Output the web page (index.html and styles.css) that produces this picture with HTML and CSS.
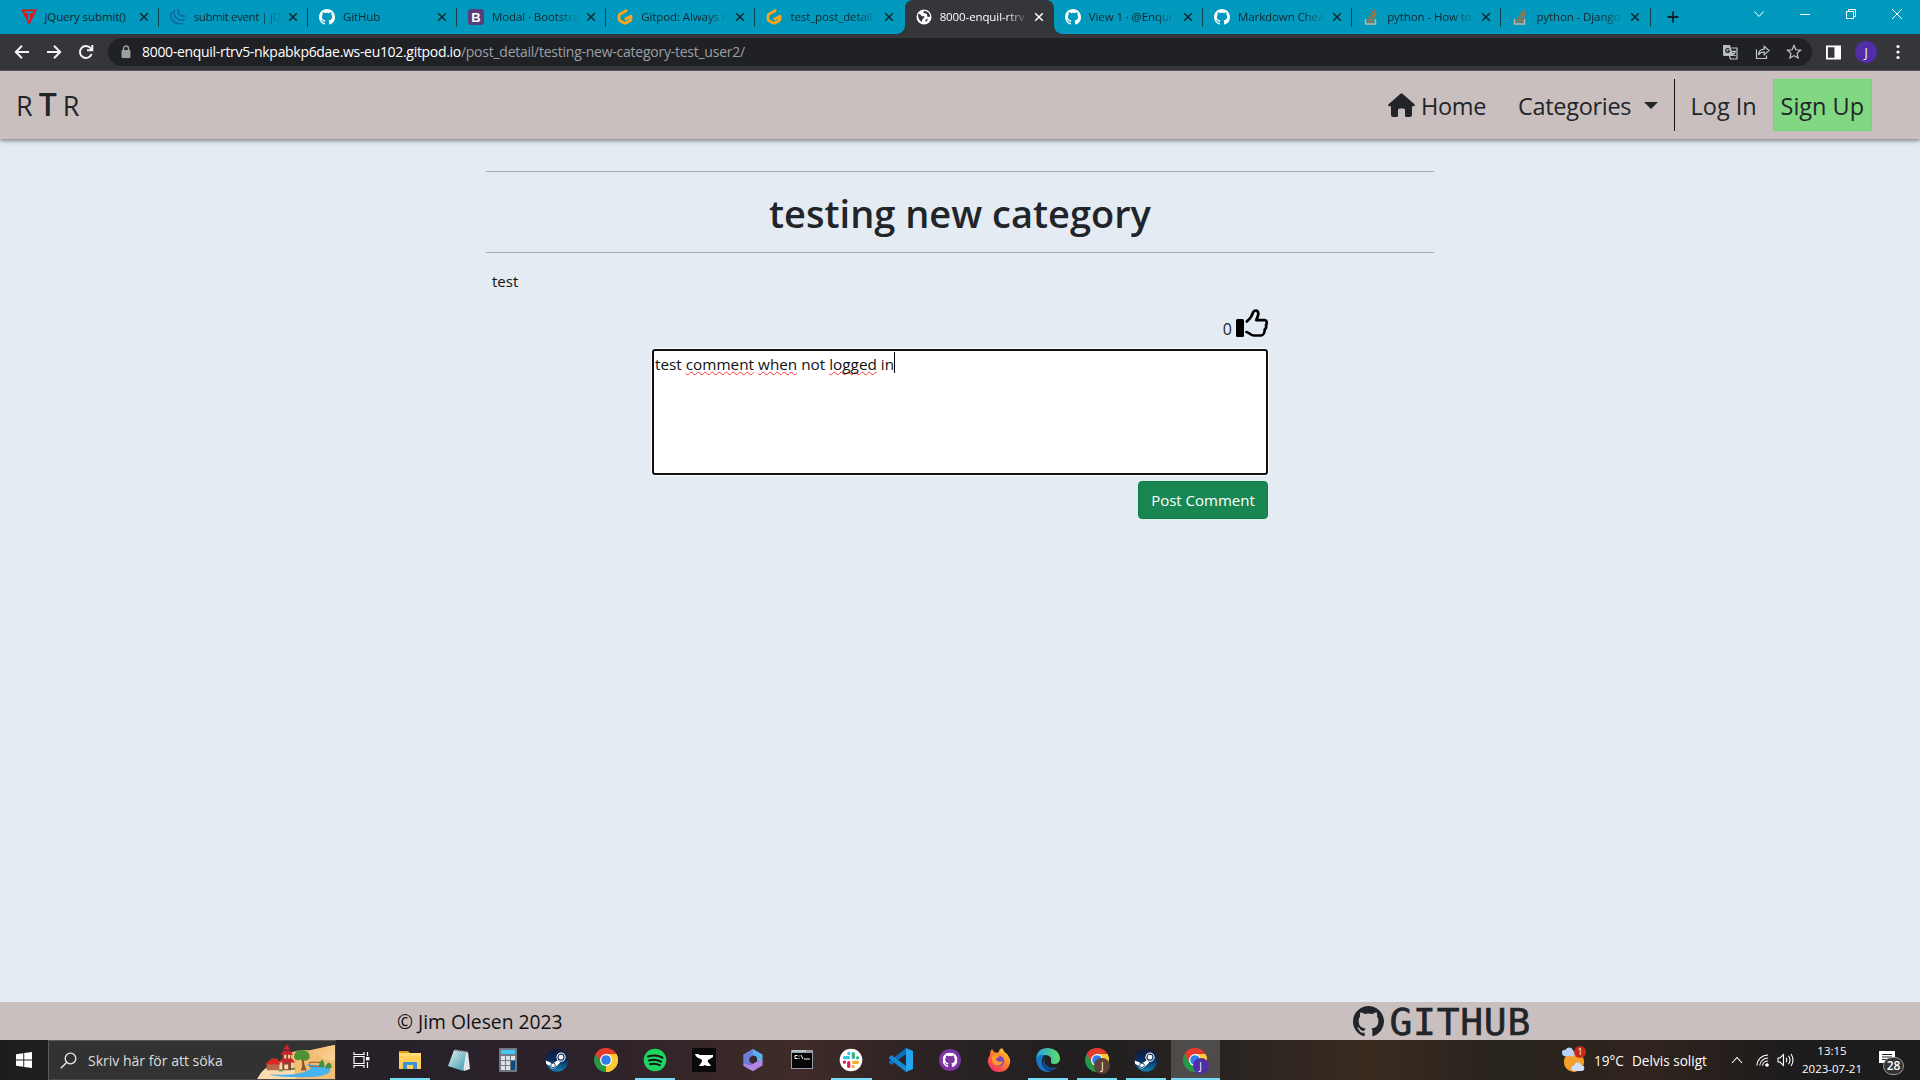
FILE: index.html
```
<!DOCTYPE html>
<html lang="sv">
<head>
<meta charset="utf-8">
<title>RTR - testing new category</title>
<link rel="stylesheet" href="styles.css">
</head>
<body>
<svg class="defs" width="0" height="0">
  <symbol id="github" viewBox="0 0 16 16"><path d="M8 0C3.58 0 0 3.58 0 8c0 3.54 2.29 6.53 5.47 7.59.4.07.55-.17.55-.38 0-.19-.01-.82-.01-1.49-2.01.37-2.53-.49-2.69-.94-.09-.23-.48-.94-.82-1.13-.28-.15-.68-.52-.01-.53.63-.01 1.08.58 1.23.82.72 1.21 1.87.87 2.33.66.07-.52.28-.87.51-1.07-1.78-.2-3.64-.89-3.64-3.95 0-.87.31-1.59.82-2.15-.08-.2-.36-1.02.08-2.12 0 0 .67-.21 2.2.82.64-.18 1.32-.27 2-.27s1.36.09 2 .27c1.53-1.04 2.2-.82 2.2-.82.44 1.1.16 1.92.08 2.12.51.56.82 1.27.82 2.15 0 3.07-1.87 3.75-3.65 3.95.29.25.54.73.54 1.48 0 1.07-.01 1.93-.01 2.2 0 .21.15.46.55.38A8.01 8.01 0 0 0 16 8c0-4.42-3.58-8-8-8z" fill="currentColor"/></symbol>
  <symbol id="x" viewBox="0 0 10 10"><path d="M1.2 1.2l7.6 7.6M8.8 1.2L1.2 8.8" stroke="currentColor" stroke-width="1.5" fill="none"/></symbol>
  <symbol id="gitpod" viewBox="0 0 16 16"><path d="M9.2 1.7L3.3 5Q2 5.7 2 7v3q0 1.200 1.100 1.800l4 2.200q.9.500 1.800 0l4-2.200Q14 11.200 14 10V7.200L8.800 10" fill="none" stroke="#ffa41b" stroke-width="2.800" stroke-linecap="round" stroke-linejoin="round"/></symbol>
  <symbol id="stack" viewBox="0 0 16 16"><path d="M2.500 10v5h10v-5" fill="none" stroke="#c5b3a8" stroke-width="1.500"/><path d="M4.500 12.800h6.200M4.600 10.500l6.200.7M5.300 7.700l6 1.800M6.900 4.600l5.300 3.400M9.200 2.200l3.700 4.900M11.300.6l1.700 4" stroke="#c96b28" stroke-width="1.300"/></symbol>
  <symbol id="chrome" viewBox="0 0 24 24"><path d="M12 12L1.610 6A12 12 0 0 1 22.390 6z" fill="#e33b2e"/><path d="M12 12L22.390 6A12 12 0 0 1 12 24z" fill="#fcc934"/><path d="M12 12V24A12 12 0 0 1 1.610 6z" fill="#279847"/><path d="M12 6h10.390A12 12 0 0 0 1.610 6L7 15z" fill="#e33b2e"/><path d="M12 6h10.390A12 12 0 0 1 12 24l5.200-9z" fill="#fcc934"/><circle cx="12" cy="12" r="6" fill="#fff"/><circle cx="12" cy="12" r="4.800" fill="#2f7de9"/></symbol>
  <symbol id="steam" viewBox="0 0 24 24"><linearGradient id="stg" x1="0" y1="0" x2="0" y2="1"><stop offset="0" stop-color="#131a38"/><stop offset=".5" stop-color="#0b2c59"/><stop offset="1" stop-color="#137fb5"/></linearGradient><circle cx="12" cy="12" r="11.500" fill="url(#stg)"/><path d="M.8 12.500l7 2.900 5-3.200 2.500 2.300-4.500 4.300q-2 3-5 .9l-1-2-3.600-1.600z" fill="#fff"/><circle cx="16" cy="9.200" r="4.600" fill="#fff"/><circle cx="16" cy="9.200" r="3" fill="#fff" stroke="#17335d" stroke-width="1.200"/><circle cx="8" cy="17.300" r="2.300" fill="none" stroke="#17335d" stroke-width=".9"/></symbol>
</svg>

<div class="tabstrip">
  <div class="tab"><svg class="fav" viewBox="0 0 16 16"><path d="M0 .5h16L8.200 16z" fill="#f20d12"/><path d="M3.500 3.200h9M8 3.200v8" stroke="#0199bd" stroke-width="2"/></svg><span class="title">jQuery submit()</span><svg class="close"><use href="#x"/></svg></div>
  <div class="tab"><svg class="fav" viewBox="0 0 16 16"><path d="M1.500 3.500C-1 9 4 16 12 14.500M4.500 1.500C2.500 6 7 12.500 14 10.800M8.300 1C7.500 4 10 7.800 15 7" fill="none" stroke="#1265ad" stroke-width="1.700" stroke-linecap="round"/></svg><span class="title tight">submit event | jQ</span><svg class="close"><use href="#x"/></svg></div>
  <div class="tab"><svg class="fav white"><use href="#github"/></svg><span class="title">GitHub</span><svg class="close"><use href="#x"/></svg></div>
  <div class="tab"><svg class="fav" viewBox="0 0 16 16"><rect width="16" height="16" rx="3" fill="#563d7c"/><text x="8" y="12.800" text-anchor="middle" class="bs">B</text></svg><span class="title">Modal · Bootstra</span><svg class="close"><use href="#x"/></svg></div>
  <div class="tab"><svg class="fav"><use href="#gitpod"/></svg><span class="title">Gitpod: Always r</span><svg class="close"><use href="#x"/></svg></div>
  <div class="tab last"><svg class="fav"><use href="#gitpod"/></svg><span class="title">test_post_detail.</span><svg class="close"><use href="#x"/></svg></div>
  <div class="tab active"><svg class="fav" viewBox="0 0 16 16"><circle cx="8" cy="8" r="7.500" fill="#fff"/><path d="M2 5q2-.5 3 1.300t3 .7q1.500 1.200-.5 2.200T6 13Q2 11 2 5zM8 1.800Q6.500 4 9 4.300t2.200 2.400 3 .8Q14 3 8 1.800zM9 11l3-1.500-1.500 3.500z" fill="#35363a"/></svg><span class="title">8000-enquil-rtrv</span><svg class="close"><use href="#x"/></svg></div>
  <div class="tab"><svg class="fav white"><use href="#github"/></svg><span class="title">View 1 · @Enqui</span><svg class="close"><use href="#x"/></svg></div>
  <div class="tab"><svg class="fav white"><use href="#github"/></svg><span class="title">Markdown Chea</span><svg class="close"><use href="#x"/></svg></div>
  <div class="tab"><svg class="fav"><use href="#stack"/></svg><span class="title">python - How to</span><svg class="close"><use href="#x"/></svg></div>
  <div class="tab"><svg class="fav"><use href="#stack"/></svg><span class="title">python - Django</span><svg class="close"><use href="#x"/></svg></div>
  <svg class="plus" viewBox="0 0 12 12"><path d="M6 .5v11M.5 6h11" stroke="#10252c" stroke-width="1.900"/></svg>
  <div class="wincontrols">
    <svg viewBox="0 0 12 12"><path d="M1.500 3.500L6 8.500l4.500-5"/></svg>
    <svg viewBox="0 0 12 12"><path d="M1 6.500h10"/></svg>
    <svg viewBox="0 0 12 12"><path d="M1.500 3.500h7v7h-7zM3.500 3.500v-2h7v7h-2"/></svg>
    <svg viewBox="0 0 12 12"><path d="M1 1l10 10M11 1L1 11"/></svg>
  </div>
</div>

<div class="toolbar">
  <svg class="tb" viewBox="0 0 16 16"><path d="M15 8H2M8 1.800L1.800 8 8 14.200"/></svg>
  <svg class="tb" viewBox="0 0 16 16"><path d="M1 8h13M8 1.800L14.200 8 8 14.200"/></svg>
  <svg class="tb" viewBox="0 0 16 16"><path d="M13.600 10A6 6 0 1 1 12.600 4.200L14 6M14.300 1v5.300H9"/></svg>
  <div class="omnibox">
    <svg class="lock" viewBox="0 0 10 14"><rect x=".5" y="5" width="9" height="8" rx="1" fill="#9aa0a6"/><path d="M2.500 5V3.500a2.500 2.500 0 0 1 5 0V5" fill="none" stroke="#9aa0a6" stroke-width="1.400"/></svg>
    <span class="url"><span class="domain">8000-enquil-rtrv5-nkpabkp6dae.ws-eu102.gitpod.io</span><span class="path">/post_detail/testing-new-category-test_user2/</span></span>
    <svg class="ob" viewBox="0 0 16 16"><path d="M1 1h7l3.500 11H2q-1 0-1-1z" fill="#b9bcc0" stroke="none"/><path d="M9.500 4H15v11H8.500l-1-3M10 7.500h4M12 6.500v1M13.200 7.500q-.7 2.500-2.700 4M10.800 9l2.700 3"/><path d="M7.200 5.200a2 2 0 1 0 .1 2.500V6.800H5.500" stroke="#202124"/></svg>
    <svg class="ob" viewBox="0 0 16 16"><path d="M2.500 5.500V14.500H12.500V11.500M4.500 11Q5 5.300 10.200 5.200V2.300L15 6.600l-4.800 4.200V8Q6.500 7.800 4.500 11z"/></svg>
    <svg class="ob" viewBox="0 0 16 16"><path d="M8 1.500l1.900 4.300 4.700.5-3.500 3.100 1 4.600L8 11.600 3.900 14l1-4.600L1.400 6.300l4.700-.5z"/></svg>
  </div>
  <svg class="panel" viewBox="0 0 16 16"><path d="M1 1.500h14v13H1z" fill="none" stroke="#fff" stroke-width="2"/><path d="M9 1h6v14H9z" fill="#fff"/></svg>
  <span class="avatar">J</span>
  <svg class="dots" viewBox="0 0 4 16"><circle cx="2" cy="2.500" r="1.600"/><circle cx="2" cy="8" r="1.600"/><circle cx="2" cy="13.500" r="1.600"/></svg>
</div>

<nav class="navbar">
  <a class="brand"><span>R</span><b>T</b><span>R</span></a>
  <div class="links">
    <a class="home"><svg viewBox="0 0 27 24"><path d="M12.500.7q1-.9 2 0L26.500 11.300q.8 1.500-.8 2H24V22q0 2-2 2h-3.500q-1.500 0-1.500-1.500V17q0-1.500-1.500-1.500h-4Q10 15.500 10 17v5.500Q10 24 8.500 24H5q-2 0-2-2v-8.700H1.300Q-.3 12.800.5 11.300z" fill="#212529"/></svg><span class="label">Home</span></a>
    <a class="cats"><span class="label">Categories</span><i class="caret"></i></a>
    <a class="login"><span>Log In</span></a>
    <a class="signup"><span>Sign Up</span></a>
  </div>
</nav>

<main>
  <div class="post-head"><h1>testing new category</h1></div>
  <p class="post-body">test</p>
  <section class="comment">
    <div class="likes"><span>0</span><svg viewBox="0 0 32 28"><rect y="10" width="8" height="18" rx="1.500"/><path d="M10.800 12.500C14 10 16 7 17 3.500C18 .8 21.800 1 22.300 4C22.600 7 21 8.500 20.300 11.200L28.500 11C31 11.200 31.300 14 30 16C30.500 18 29.500 20 28.700 20.500C28.700 23 27.500 26.500 25 26.500H18C14.500 26.500 13.500 23.500 10.500 23" fill="none" stroke="#000" stroke-width="2.700" stroke-linecap="round" stroke-linejoin="round"/></svg></div>
    <div class="textarea"><span>test <u>comment</u> <u>when</u> not <u>logged</u> in</span><i class="cursor"></i></div>
    <button class="post">Post Comment</button>
  </section>
</main>

<footer>
  <span>© Jim Olesen 2023</span>
  <a class="gh"><svg><use href="#github"/></svg><span class="gh-text">GITHUB</span></a>
</footer>

<div class="taskbar">
  <div class="start"><svg viewBox="0 0 16 16"><path d="M0 2.300L7.300 1.200V7.600H0zM8.200 1L16 0V7.600H8.200zM0 8.400H7.300V14.800L0 13.700zM8.200 8.400H16V16L8.200 15z" fill="#fff"/></svg></div>
  <div class="search">
    <svg class="glass" viewBox="0 0 17 17"><circle cx="10.500" cy="6.500" r="5.300"/><path d="M6.800 10.200L.8 16.300"/></svg>
    <span>Skriv här för att söka</span>
    <svg class="scene" viewBox="0 0 80 39"><defs><linearGradient id="sand" x1="0" y1="0" x2="1" y2="1"><stop offset="0" stop-color="#f5b867"/><stop offset="1" stop-color="#f8d49d"/></linearGradient></defs><path d="M0 39Q6 26 22 22Q34 11 50 12Q62 8 80 4V39z" fill="#fbdcae"/><path d="M34 12Q50 6 62 13Q72 18 80 18V39H40z" fill="#f3bd74"/><path d="M52 10Q68 6 80 4v16Q68 20 60 12z" fill="url(#sand)"/><path d="M14 34Q40 36 50 31Q60 28 50 24Q68 24 75 28Q77 36 55 37Q30 38 14 35z" fill="#45b3ee"/><path d="M10 23h13v7H10z" fill="#b56a4d"/><path d="M8 24l7-6h6l3 6z" fill="#d92a27"/><path d="M26 12h9v18h-9z" fill="#89432f"/><path d="M23 22l3-4h10l3 4zM24 14l3-4h7l3 4zM27 9l3.500-6L34 9z" fill="#c9232c"/><path d="M28 14h2v4h-2zM32 14h2v4h-2zM28 24h4v5h-4z" fill="#ffdda1"/><path d="M45 30q3-6 0-12h3q0 7 3 12z" fill="#87502c"/><path d="M38 17q0-8 8-8q9 1 8 9q-4 4-9 1q-6 2-7-2z" fill="#4f9133"/><path d="M54 22h11v4H54z" fill="none" stroke="#a26e40" stroke-width="1.200"/><path d="M64 27q-1-5 3-8q3 4 2 8zM70 28q0-4 4-6q4 3 2 6zM34 30q2-5 6-1zM22 31q2-4 5 0z" fill="#3f9142"/></svg>
  </div>
  <div class="apps">
    <div class="app"><svg viewBox="0 0 24 24"><path d="M5 4v2.500h10V4M5 20v-2.500h10V20M5 8.500h10v7H5zM18.500 4v4M18.500 14v6" fill="none" stroke="#fff" stroke-width="1.200"/><path d="M17 9h3.500v3.300H17z" fill="#fff"/></svg></div>
    <div class="app open"><svg viewBox="0 0 24 24"><path d="M1 3h9l2 2H1z" fill="#e09c14"/><path d="M1 5h22v16H1z" fill="#ffcf57"/><path d="M1 5h22v3H1z" fill="#ffda75"/><path d="M5 21v-6q0-1 1-1h12q1 0 1 1v6h-4v-4H9v4z" fill="#3b94d9"/></svg></div>
    <div class="app"><svg viewBox="0 0 24 24"><defs><linearGradient id="np" x2="1" y2="1"><stop stop-color="#e1f2f2"/><stop offset="1" stop-color="#3e98aa"/></linearGradient></defs><path d="M7 2l14 2 2 17-6 2z" fill="#e1e7e9"/><path d="M7 2l12 3-3 18L1 18z" fill="url(#np)"/><path d="M8 2l13 2" stroke="#777" stroke-width="2" stroke-dasharray="1 1"/></svg></div>
    <div class="app"><svg viewBox="0 0 24 24"><rect x="3" width="18" height="24" rx="1" fill="#6e7a84"/><path d="M5 2h14v4H5z" fill="#48c7f3"/><path d="M5 8h4v4H5zM10 8h4v4h-4zM15 8h4v4h-4zM5 13h4v4H5zM10 13h4v4h-4zM5 18h4v4H5zM10 18h4v4h-4z" fill="#dfe3e6"/><path d="M15 13h4v9h-4z" fill="#0c4a82"/></svg></div>
    <div class="app"><svg><use href="#steam"/></svg></div>
    <div class="app"><svg><use href="#chrome"/></svg></div>
    <div class="app open"><svg viewBox="0 0 24 24"><circle cx="12" cy="12" r="11.300" fill="#1fd45f"/><path d="M5 8.500q8-2.500 14.500 1.200M6 12.500q6.500-2 12 1.200M7 16.200q5-1.500 9.800 1" fill="none" stroke="#151515" stroke-width="2" stroke-linecap="round"/></svg></div>
    <div class="app"><svg viewBox="0 0 24 24"><path d="M0 0h24v24H0z" fill="#090909"/><path d="M3 6h4v1h14v2l-5 3q-1 2 1 3l2 3h-4l-2-1-2 1H7l2-3q2-2 0-4Q4 10 3 6z" fill="#fff"/></svg></div>
    <div class="app"><svg viewBox="0 0 24 24"><path d="M12 1L2.500 6.500v11.500l7 4 2.500-6-3.500-2v-4l6-3z" fill="#7c68d5"/><path d="M12 1l9.500 5.500v8L15 12V8.500L9 6z" fill="#57b3ea"/><path d="M21.500 12v5.500L12 23.300l-9.500-5.500v-2.500l7 2L16 13z" fill="#b184e4"/><path d="M2.500 6.500v9l5.500 1V9l4-3V1z" fill="#6b7fda"/><path d="M9.500 9l3.500-1.500 3 2v4l-4 2-3-2z" fill="#34292c"/></svg></div>
    <div class="app"><svg viewBox="0 0 24 24"><path d="M1 2h22v19H1z" fill="#939da8"/><path d="M2 5h20v15H2z" fill="#050505"/><path d="M2 3h14" stroke="#dce5ed"/><path d="M7.500 7.500H5v3h2.500M9 7.500v1M9 10v1M11 7l2 4M14 11h6" stroke="#fff" fill="none"/></svg></div>
    <div class="app open"><svg viewBox="0 0 24 24"><circle cx="12" cy="12" r="11.300" fill="#fff"/><g fill="none" stroke-width="3.200" stroke-linecap="round"><path d="M5.500 9.700h4M9.800 5.300v.2" stroke="#36c5f0"/><path d="M14.300 5.500v4M18.700 9.800h-.2" stroke="#2eb67d"/><path d="M14.500 14.300h4M14.200 18.700v-.2" stroke="#ecb22e"/><path d="M9.700 14.500v4M5.300 14.200h.2" stroke="#e01e5a"/></g></svg></div>
    <div class="app"><svg viewBox="0 0 24 24"><path d="M17 0l7 3v18l-7 3z" fill="#24a5ef"/><path d="M17 0v6L2.500 17 0 15v-1.500z" fill="#0e6fb8"/><path d="M17 24v-6L2.500 7 0 9v1.500z" fill="#1687d2"/></svg></div>
    <div class="app"><svg viewBox="0 0 24 24"><circle cx="12" cy="12" r="11" fill="#7d35a5"/><svg x="4.500" y="4.500" width="15" height="15" class="ghin"><use href="#github"/></svg></svg></div>
    <div class="app"><svg viewBox="0 0 24 24"><defs><linearGradient id="ff" x1="1" y1="0" x2=".2" y2="1"><stop stop-color="#ffe234"/><stop offset=".45" stop-color="#ff8a26"/><stop offset="1" stop-color="#f6246b"/></linearGradient></defs><path d="M3 7q0-4 2-6l2 3q3 1 5 0 0-3 3-4 2 4 5 6 4 5 3 9-2 9-11 9T.7 14Q.5 10 3 7z" fill="url(#ff)"/><circle cx="12" cy="13" r="5.200" fill="#7b46c4"/><path d="M5 8q5-2 8 1-4 0-4 3 3 3 7 1-2 6-8 4-4-3-3-9z" fill="#ff9a29"/></svg></div>
    <div class="app open"><svg viewBox="0 0 24 24"><defs><linearGradient id="ed" x2="1"><stop stop-color="#269ee5"/><stop offset="1" stop-color="#62de68"/></linearGradient></defs><path d="M0 11Q1 0 12 0q11 1 12 10 0 6-6 6-4 0-3-3 1-5-5-6Q3 7 0 11z" fill="url(#ed)"/><path d="M0 12q2-6 8-5-3 4-2 9t9 8Q2 25 0 12z" fill="#1378cf"/><path d="M9 9q-5 7 1 12 6 4 12-2-7 2-11-1-4-3-2-9z" fill="#0c4f95"/></svg></div>
    <div class="app open"><svg><use href="#chrome"/></svg><span class="badge brown">J</span></div>
    <div class="app open"><svg><use href="#steam"/></svg></div>
    <div class="app open current"><svg><use href="#chrome"/></svg><span class="badge">J</span></div>
  </div>
  <div class="tray">
    <div class="weather"><svg viewBox="0 0 26 28"><circle cx="13" cy="16" r="11" fill="#f6a02c"/><path d="M3 10q-3-.5-3-4t4-3q2-4 6-2 2 1 2 3 3 1 2 4-1 2-3 2z" fill="#b9d2f8"/><path d="M13 26q-3-.5-3-3t3-3q2-5 6-3 2 1 2 3 4 0 3 4-1 2-3 2z" fill="#cbdffb"/></svg><span class="count">1</span></div>
    <span class="temp">19°C</span><span class="cond">Delvis soligt</span>
    <svg class="up" viewBox="0 0 12 8"><path d="M1 7l5-5.500L11 7"/></svg>
    <svg class="wifi" viewBox="0 0 14 14"><path d="M1 13A12 12 0 0 1 13 1.500M4 13A9 9 0 0 1 13 4.800M7 13A6 6 0 0 1 13 8M10 13a3 3 0 0 1 3-2"/><circle cx="12" cy="12.500" r="1.300" fill="#fff"/></svg>
    <svg class="vol" viewBox="0 0 17 14"><path d="M1 5h2l3.500-3.500v11L3 9H1zM9 4.700q1.500 2.300 0 4.600M11.500 2.700q3 4.300 0 8.600M14 1q4 6 0 12"/></svg>
    <div class="clock"><span>13:15</span><span>2023-07-21</span></div>
    <div class="notif"><svg viewBox="0 0 16 16"><path d="M0 0h16v12H9l-3 3v-3H0z" fill="#fff"/><path d="M3 3.500h10M3 6h10M3 8.500h7" stroke="#222" stroke-width="1.200"/></svg><span>28</span></div>
  </div>
</div>
</body>
</html>
```
FILE: styles.css
```
* { box-sizing: border-box; }
body { margin: 0; width: 1920px; height: 1080px; overflow: hidden; display: flex; flex-direction: column; background: #e4ebf3; color: #212529; font-family: "Open Sans", "Noto Sans", sans-serif; font-size: 16px; }
svg { flex: none; display: block; }
.defs { position: absolute; }

.tabstrip { flex: none; height: 34px; background: #0199bd; display: flex; align-items: center; padding-left: 9.500px; }
.tab { flex: none; width: 149.2px; height: 34px; display: flex; align-items: center; padding-left: 11px; color: #12282f; position: relative; }
.tab::after { content: ""; position: absolute; right: 0; top: 8px; width: 1px; height: 19px; background: #134452; }
.tab.last::after, .tab.active::after { display: none; }
.fav { width: 16px; height: 16px; margin-right: 8px; }
.white { color: #fff; }
.bs { font: bold 13px "Liberation Sans", sans-serif; fill: #fff; }
.title { width: 88px; margin-right: -4px; padding-bottom: 1px; white-space: nowrap; font-size: 11.500px; letter-spacing: -.1px; -webkit-mask-image: linear-gradient(90deg, #000 66px, rgba(0,0,0,.1) 86px); mask-image: linear-gradient(90deg, #000 66px, rgba(0,0,0,.1) 86px); }
.title.tight { letter-spacing: -.4px; }
.tab:first-child .title { -webkit-mask: none; mask: none; }
.close { width: 10px; height: 10px; margin-left: 10px; }
.tab.active { background: #35363a; color: #fff; border-radius: 8px 8px 0 0; }
.tab.active::before { content: ""; position: absolute; left: -8px; right: -8px; bottom: 0; height: 8px; background: radial-gradient(circle at 0 0, transparent 7.500px, #35363a 8px) left / 8px 8px no-repeat, radial-gradient(circle at 100% 0, transparent 7.500px, #35363a 8px) right / 8px 8px no-repeat; }
.plus { width: 12px; height: 12px; margin-left: 16px; }
.wincontrols { margin-left: auto; display: flex; gap: 34px; padding: 0 17px 6px 0; }
.wincontrols svg { width: 12px; height: 12px; fill: none; stroke: #fff; stroke-width: 1; }

.toolbar { flex: none; height: 37px; background: #35363a; display: flex; align-items: center; padding-left: 14px; gap: 16px; border-bottom: 1px solid #5b595d; }
.tb { width: 16px; height: 16px; fill: none; stroke: #f1f3f4; stroke-width: 2; }
.omnibox { width: 1704px; height: 28px; margin-left: -2px; border-radius: 14px; background: #202124; display: flex; align-items: center; padding: 0 10px 0 13px; }
.lock { width: 10px; height: 14px; margin-right: 11px; }
.url { flex: 1; font-size: 14px; white-space: nowrap; padding-bottom: 1px; }
.domain { color: #fff; letter-spacing: -.31px; }
.path { color: #9aa0a6; letter-spacing: -.247px; }
.ob { width: 16px; height: 16px; margin-left: 16px; fill: none; stroke: #c6c9cc; stroke-width: 1.200; }
.panel { width: 15px; height: 15px; margin-left: -2px; }
.avatar { width: 22px; height: 22px; border-radius: 50%; background: #512da8; color: #fff; font-size: 12px; display: grid; place-items: center; margin-left: -2px; }
.dots { width: 4px; height: 16px; fill: #fff; margin-left: 3px; }

.navbar { flex: none; height: 68px; background: #cabfbf; box-shadow: 0 2px 4px rgba(70, 70, 70, .6); display: flex; justify-content: space-between; padding: 8px 48px 8px 16px; position: relative; }
.brand { display: flex; align-items: baseline; font-size: 27px; line-height: 50px; gap: 6px; }
.brand b { font-size: 32px; font-weight: 600; }
.links { display: flex; font-size: 23.500px; white-space: nowrap; }
.links a { display: flex; align-items: center; height: 52px; }
.links span { padding-top: 2px; }
.home { width: 130px; }
.home svg { width: 27px; height: 24px; margin-right: 6px; }
.label { letter-spacing: -.3px; }
.cats { width: 157px; border-right: 1px solid #111; justify-content: space-between; padding-right: 16px; }
.caret { border: 7px solid transparent; border-top-color: #212529; border-bottom: 0; }
.login { width: 98px; padding-left: 15.500px; }
.signup { width: 99px; padding-left: 6.500px; background: #82d882; border: 1px solid #72d878; }

main { flex: 1; display: flex; flex-direction: column; align-items: center; padding-top: 32px; }
.post-head { width: 948px; height: 82px; border: solid #a6abb1; border-width: 1px 0; display: grid; place-items: center; padding-top: 2px; }
h1 { margin: 0; font-size: 38px; font-weight: 600; line-height: 48px; white-space: nowrap; }
.post-body { width: 936px; margin: 16px 0 0; line-height: 24px; font-size: 15px; color: #111; }
.comment { width: 616px; display: flex; flex-direction: column; align-items: flex-end; margin-top: 16px; }
.likes { display: flex; align-items: flex-end; gap: 4px; height: 28px; margin-bottom: 12px; }
.likes span { line-height: 22px; margin-bottom: -3px; }
.likes svg { width: 32px; height: 28px; }
.textarea { width: 616px; height: 126px; background: #fff; border: 2px solid #101010; border-radius: 3px; display: flex; align-items: flex-start; padding: 1px; color: #111; font-size: 15.300px; line-height: 24px; white-space: nowrap; box-shadow: 0 0 0 1px #fff; }
.textarea u { text-decoration: underline wavy #f33 1px; text-decoration-skip-ink: none; text-underline-offset: 1px; }
.cursor { width: 1px; height: 21px; background: #000; }
.post { width: 130px; height: 38px; margin-top: 6px; padding: 0; font: inherit; font-size: 15px; color: #fff; background: #198754; border: 1px solid #0c7d3c; border-radius: 4px; white-space: nowrap; }

footer { flex: none; height: 38px; background: #cabfbf; display: flex; align-items: center; justify-content: space-between; padding: 0 389px 0 397px; font-size: 19.300px; color: #111; }
.gh { display: flex; align-items: center; gap: 6px; color: #212529; font: 38px/38px "DejaVu Sans Mono", monospace; letter-spacing: .7px; -webkit-text-stroke: .6px #212529; }
.gh svg { width: 31px; height: 31px; stroke: none; }
.gh-text { padding-top: 2px; }

.taskbar { flex: none; height: 40px; display: flex; color: #fff; background: linear-gradient(90deg, #1d1d1f 0, #252028 340px, #2d222a 600px, #402b28 800px, #2b2223 930px, #211f20 1080px, #292420 1230px, #3a2b20 1370px, #28231e 1500px, #30241d 1650px, #1e1c1c 1780px, #1d1c1c); }
.start { width: 48px; display: grid; place-items: center; }
.start svg { width: 16px; height: 16px; }
.search { width: 288px; background: #323232; border: 1px solid #5a5a5a; border-bottom-color: #484848; border-right: 0; display: flex; align-items: center; padding-left: 11px; color: #dedede; white-space: nowrap; position: relative; font-size: 14px; }
.glass { width: 17px; height: 17px; margin-right: 11px; fill: none; stroke: #eee; stroke-width: 1.300; }
.scene { width: 80px; height: 38px; position: absolute; right: 0; bottom: 0; }
.apps { display: flex; }
.app { width: 49.100px; height: 40px; display: grid; place-items: center; position: relative; }
.app svg { width: 24px; height: 24px; }
.app svg .ghin { width: 15px; height: 15px; color: #fff; }
.open::after { content: ""; position: absolute; bottom: 0; left: 4.500px; right: 4.500px; height: 2px; background: #76dcf7; }
.current { background: #4e4c4b; }
.current::after { left: 0; right: 0; }
.badge { position: absolute; left: 22px; top: 18px; width: 16px; height: 16px; border-radius: 50%; background: #512da8; font-size: 10px; line-height: 16px; text-align: center; }
.brown { background: #5d4037; }
.tray { margin-left: auto; display: flex; align-items: center; font-size: 13.600px; white-space: nowrap; width: 358px; }
.tray > svg { fill: none; stroke: #fff; stroke-width: 1.100; }
.weather { position: relative; width: 26px; margin-right: 6px; }
.weather svg { width: 24px; height: 26px; }
.count { position: absolute; left: 12px; top: -1px; width: 12px; height: 12px; border-radius: 50%; background: #c42b1c; font-size: 9px; line-height: 12px; text-align: center; }
.temp { width: 38px; }
.cond { width: 99px; }
.up { width: 12px; height: 8px; }
.wifi { width: 13px; height: 14px; margin-left: 13px; }
.vol { width: 17px; height: 14px; margin-left: 8px; }
.clock { width: 60px; margin-left: 8px; font-size: 11.500px; display: flex; flex-direction: column; align-items: center; line-height: 18px; }
.notif { position: relative; margin-left: 17px; width: 26px; height: 18px; }
.notif svg { width: 16px; height: 16px; }
.notif span { position: absolute; left: 4px; top: 6px; width: 21px; height: 18px; border-radius: 9px; background: #333; border: 1px solid #999; font-size: 12px; font-weight: 600; line-height: 16px; text-align: center; }
```
